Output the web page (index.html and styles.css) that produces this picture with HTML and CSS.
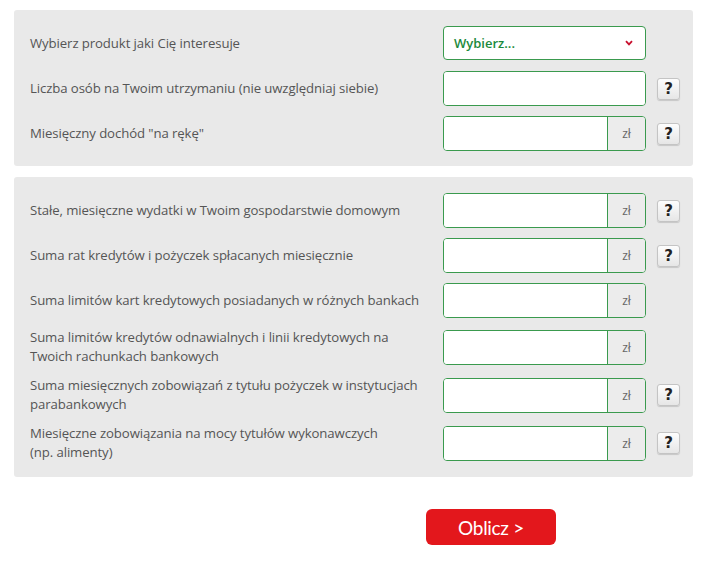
FILE: index.html
```html
<!DOCTYPE html>
<html lang="pl">
<head>
    <meta charset="utf-8">
    <title>Kalkulator zdolności kredytowej</title>
    <link rel="stylesheet" href="styles.css">
</head>
<body>
    <form class="calc">
        <div class="panel">
            <div class="row">
                <label>Wybierz produkt jaki Cię interesuje</label>
                <div class="field select">
                    <span class="select-value">Wybierz...</span>
                    <svg class="chevron" width="8" height="6" viewBox="0 0 8 6"><path d="M1 1.2 L4 4.4 L7 1.2" fill="none" stroke="#c8102e" stroke-width="1.8"/></svg>
                </div>
            </div>
            <div class="row">
                <label>Liczba osób na Twoim utrzymaniu (nie uwzględniaj siebie)</label>
                <div class="field"><input type="text"></div>
                <button type="button" class="help">?</button>
            </div>
            <div class="row">
                <label>Miesięczny dochód "na rękę"</label>
                <div class="field"><input type="text"><span class="unit">zł</span></div>
                <button type="button" class="help">?</button>
            </div>
        </div>

        <div class="panel">
            <div class="row">
                <label>Stałe, miesięczne wydatki w Twoim gospodarstwie domowym</label>
                <div class="field"><input type="text"><span class="unit">zł</span></div>
                <button type="button" class="help">?</button>
            </div>
            <div class="row">
                <label>Suma rat kredytów i pożyczek spłacanych miesięcznie</label>
                <div class="field"><input type="text"><span class="unit">zł</span></div>
                <button type="button" class="help">?</button>
            </div>
            <div class="row">
                <label>Suma limitów kart kredytowych posiadanych w różnych bankach</label>
                <div class="field"><input type="text"><span class="unit">zł</span></div>
            </div>
            <div class="row">
                <label>Suma limitów kredytów odnawialnych i linii kredytowych na Twoich rachunkach bankowych</label>
                <div class="field"><input type="text"><span class="unit">zł</span></div>
            </div>
            <div class="row">
                <label>Suma miesięcznych zobowiązań z tytułu pożyczek w instytucjach parabankowych</label>
                <div class="field"><input type="text"><span class="unit">zł</span></div>
                <button type="button" class="help">?</button>
            </div>
            <div class="row">
                <label>Miesięczne zobowiązania na mocy tytułów wykonawczych<br>(np. alimenty)</label>
                <div class="field"><input type="text"><span class="unit">zł</span></div>
                <button type="button" class="help">?</button>
            </div>
        </div>

        <div class="actions">
            <button type="button" class="submit">Oblicz &gt;</button>
        </div>
    </form>
</body>
</html>
```

FILE: styles.css
```css
* { box-sizing: border-box; margin: 0; padding: 0; }
body { background: #fff; font-family: 'Open Sans', 'Liberation Sans', sans-serif; font-size: 13.2px; color: #555; padding: 10px 21px 0 14px; }

.panel { background: #e9e9e9; border-radius: 3px; padding: 16px 13px 15px 16px; display: flex; flex-direction: column; gap: 10px; margin-bottom: 11px; }
.row { display: grid; grid-template-columns: 402px 203px 23px; column-gap: 11px; align-items: center; min-height: 35px; }
.row label { line-height: 19px; letter-spacing: -0.1px; }

.field { display: flex; height: 35px; border: 1px solid #3a9a4e; border-radius: 4px; background: #fff; overflow: hidden; }
.field input { flex: 1; min-width: 0; border: none; outline: none; background: #fff; font: inherit; padding: 0 10px; }
.unit { width: 38px; border-left: 1px solid #3a9a4e; background: #ececec; color: #666; font-size: 12px; display: flex; align-items: center; justify-content: center; }

.select { align-items: center; justify-content: space-between; padding: 0 12px 0 10px; height: 34px; margin-top: -1px; }
.select-value { color: #1b8a3c; font-weight: 600; font-size: 13px; }
.chevron { display: block; }

.help { width: 23px; height: 22px; border: 1px solid #c4c4c4; border-radius: 3px; background: linear-gradient(#fdfdfd, #e6e6e6); box-shadow: 0 1px 1px rgba(0,0,0,0.15); font-family: 'DejaVu Sans', sans-serif; font-weight: 700; font-size: 15px; color: #222; line-height: 20px; cursor: pointer; }

.actions { display: flex; justify-content: flex-start; padding: 21px 0 0 412px; }
.submit { width: 130px; height: 36px; border: none; border-radius: 6px; background: #e3171c; color: #fff; font-family: 'Lato', sans-serif; font-size: 19px; letter-spacing: -0.3px; cursor: pointer; }
```
